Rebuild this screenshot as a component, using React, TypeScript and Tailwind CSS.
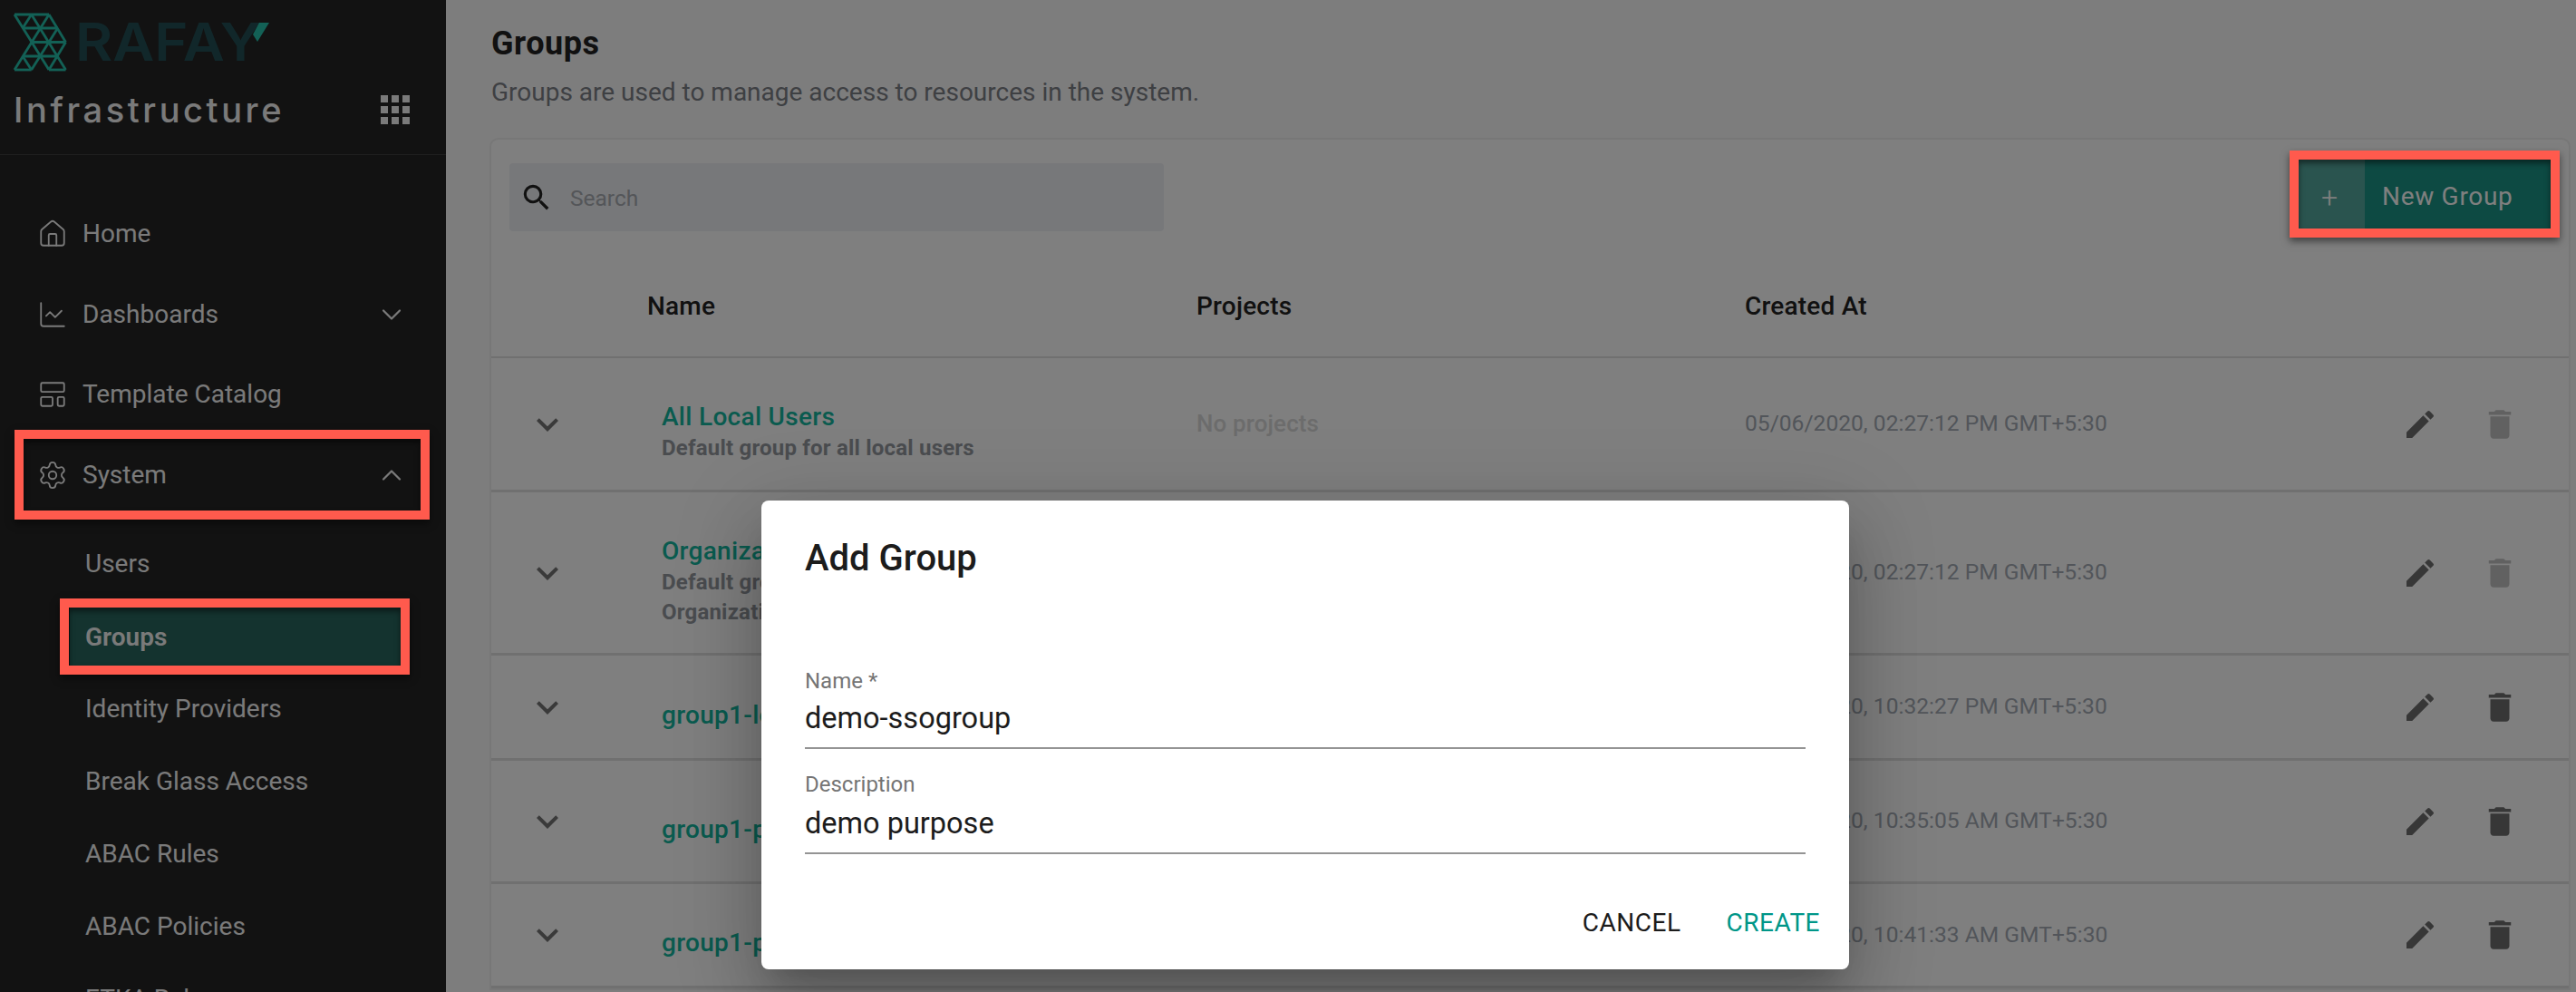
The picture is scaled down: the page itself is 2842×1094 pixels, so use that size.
import { ChartLine, ChevronDown, ChevronUp, House, LayoutTemplate, Settings } from 'lucide-react'
import { MdDelete, MdEdit, MdExpandMore, MdSearch } from 'react-icons/md'

const subItems = ['Users', 'Groups', 'Identity Providers', 'Break Glass Access', 'ABAC Rules', 'ABAC Policies', 'ETKA Rules']

const rows = [
    { name: 'All Local Users', desc: ['Default group for all local users'], projects: 'No projects', date: '05/06/2020, 02:27:12 PM GMT+5:30', h: 'h-[148px]', locked: true },
    { name: 'Organization Admins', desc: ['Default group for organization admins', 'Organization wide access'], projects: 'No projects', date: '05/06/2020, 02:27:12 PM GMT+5:30', h: 'h-[180px]', locked: true },
    { name: 'group1-local', desc: [], projects: 'No projects', date: '07/21/2020, 10:32:27 PM GMT+5:30', h: 'h-[116px]', locked: false },
    { name: 'group1-prod', desc: [], projects: 'No projects', date: '08/14/2020, 10:35:05 AM GMT+5:30', h: 'h-[136px]', locked: false },
    { name: 'group1-platform', desc: [], projects: 'No projects', date: '08/14/2020, 10:41:33 AM GMT+5:30', h: 'h-[115px]', locked: false },
]

// triangle lattice of the logo, in page pixels
const latticeX = { a: 16, b: 25, c: 34.7, d: 44.3, e: 54, f: 63.7, g: 72.5 }
const latticeY = [16, 31, 46.5, 62, 77]
const latticeLines: [keyof typeof latticeX, number, keyof typeof latticeX, number][] = [
    ['a', 0, 'e', 0], ['b', 1, 'f', 1], ['c', 2, 'g', 2], ['b', 3, 'f', 3], ['a', 4, 'c', 4], ['e', 4, 'g', 4],
    ['a', 0, 'e', 4], ['c', 0, 'g', 4], ['e', 0, 'g', 2], ['b', 3, 'c', 4],
    ['e', 0, 'a', 4], ['g', 2, 'e', 4], ['f', 1, 'c', 4], ['c', 0, 'b', 1],
]

function Logo() {
    return (
        <svg width="300" height="90" viewBox="0 0 300 90" className="block">
            {latticeLines.map(([x1, y1, x2, y2], i) => (
                <line key={i} x1={latticeX[x1]} y1={latticeY[y1]} x2={latticeX[x2]} y2={latticeY[y2]} stroke="#26c2ac" strokeWidth="2.8" />
            ))}
            <text x="83" y="67" fontFamily="Inter, sans-serif" fontWeight="600" fontSize="58" fill="#234f55" textLength="205" lengthAdjust="spacingAndGlyphs">
                RAFAY
            </text>
            <polygon points="286,25 297,25 284,46 279,38" fill="#26c2ac" />
        </svg>
    )
}

function NavItem({ icon, label, chevron }: { icon: React.ReactNode; label: string; chevron?: 'up' | 'down' }) {
    return (
        <div className="flex h-[88.5px] items-center pl-[41px] pr-[42px]">
            <span className="flex w-[34px] justify-center">{icon}</span>
            <span className="ml-[16px] flex-1 text-[28px] text-[#f4f4f4]">{label}</span>
            {chevron === 'down' && <ChevronDown size={36} strokeWidth={1.5} className="text-[#f4f4f4]" />}
            {chevron === 'up' && <ChevronUp size={36} strokeWidth={1.5} className="text-[#f4f4f4]" />}
        </div>
    )
}

function Sidebar() {
    return (
        <aside className="flex h-full w-[492px] shrink-0 flex-col overflow-hidden bg-[#242424] font-[Roboto,sans-serif]">
            <div className="h-[171px] shrink-0 border-b border-[#3e3e3e]">
                <Logo />
                <div className="flex items-center justify-between pl-[15px] pr-[40px] pt-[9px]">
                    <span className="font-[Inter,sans-serif] text-[38px] font-medium leading-[44px] tracking-[3.6px] text-[#f4f4f4]">Infrastructure</span>
                    <span className="grid grid-cols-3 gap-[4px]">
                        {Array.from({ length: 9 }).map((_, i) => (
                            <span key={i} className="size-[8px] bg-[#f4f4f4]" />
                        ))}
                    </span>
                </div>
            </div>
            <nav className="pt-[43px]">
                <NavItem icon={<House size={34} strokeWidth={1.3} className="text-[#f4f4f4]" />} label="Home" />
                <NavItem icon={<ChartLine size={34} strokeWidth={1.3} className="text-[#f4f4f4]" />} label="Dashboards" chevron="down" />
                <NavItem icon={<LayoutTemplate size={34} strokeWidth={1.3} className="text-[#f4f4f4]" />} label="Template Catalog" />
                <NavItem icon={<Settings size={34} strokeWidth={1.3} className="text-[#f4f4f4]" />} label="System" chevron="up" />
                <div className="flex flex-col pl-[77px] pr-[50px] pt-[14px]">
                    {subItems.map((item) => (
                        <div
                            key={item}
                            className={
                                item === 'Groups'
                                    ? 'flex h-[80px] items-center rounded-lg bg-[#28665e] pl-[17px] pt-[2px] text-[28px] font-semibold text-[#f4f4f4]'
                                    : 'flex h-[80px] items-center pl-[17px] text-[28px] text-[#f4f4f4]'
                            }
                        >
                            {item}
                        </div>
                    ))}
                </div>
            </nav>
        </aside>
    )
}

function GroupRow({ row }: { row: (typeof rows)[number] }) {
    return (
        <div className={`grid grid-cols-[172px_606px_605px_701px_88px_88px] items-center border-b-[3px] border-[#e0e0e0] ${row.h}`}>
            <span className="flex justify-end pr-[86px]">
                <MdExpandMore size={48} className="text-[#757575]" />
            </span>
            <div className="pl-4 pt-[18px]">
                <div className="text-[28px] font-medium leading-[36px] tracking-[0.3px] text-[#14b69e]">{row.name}</div>
                {row.desc.map((line) => (
                    <div key={line} className="text-[24px] font-bold leading-[33px] tracking-[0.2px] text-[#94999f]">
                        {line}
                    </div>
                ))}
            </div>
            <span className="text-[26px] font-medium tracking-[0.1px] text-[#d8d8d8]">{row.projects}</span>
            <span className="text-[24.6px] text-[#a4abb4]">{row.date}</span>
            <span className="flex justify-center">
                <MdEdit size={40} className="text-[#6e6e6e]" />
            </span>
            <span className="flex justify-center">
                <MdDelete size={42} className={row.locked ? 'text-[#c2c2c2]' : 'text-[#6e6e6e]'} />
            </span>
        </div>
    )
}

function GroupsPage() {
    return (
        <main className="h-full flex-1 overflow-hidden bg-[#fafafa] pl-[50px] pr-2 pt-[26px] font-[Roboto,sans-serif]">
            <h1 className="text-[36px] font-bold leading-[44px] tracking-[0.5px] text-[#222222]">Groups</h1>
            <p className="mt-[12px] text-[28px] leading-[40px] text-[#7d8087]">Groups are used to manage access to resources in the system.</p>
            <section className="mt-[32px] rounded-t-lg bg-white shadow-[0_0_0_2px_#eeeeee]">
                <div className="flex h-[127px] items-start justify-between pl-[20px] pr-[20px]">
                    <div className="mt-[26px] flex h-[75px] w-[722px] items-center rounded bg-[#eef0f4] pl-[11px]">
                        <MdSearch size={38} className="text-[#222222]" />
                        <span className="ml-[18px] pt-[4px] text-[24.5px] text-[#a8acb2]">Search</span>
                    </div>
                    <button className="mt-[22px] flex h-[76px] w-[278px] items-center bg-[#1a9486] pt-[6px] text-[28px] tracking-[0.7px] text-white">
                        <span className="-mt-[6px] flex h-[76px] w-[73px] items-center justify-center bg-[#54a89e] pr-[4px] pt-[7px] text-[32px] font-light">+</span>
                        <span className="ml-[19px]">New Group</span>
                    </button>
                </div>
                <div className="grid h-[114px] grid-cols-[172px_606px_605px_1fr] items-center border-b-[2px] border-[#e0e0e0] pt-[2px] text-[28px] font-medium tracking-[0.2px] text-[#222222]">
                    <span />
                    <span>Name</span>
                    <span>Projects</span>
                    <span>Created At</span>
                </div>
                {rows.map((row) => (
                    <GroupRow key={row.name} row={row} />
                ))}
            </section>
        </main>
    )
}

function AddGroupDialog() {
    return (
        <div className="absolute left-[840px] top-[552px] flex h-[517px] w-[1200px] flex-col rounded-lg bg-white pl-[48px] pr-[48px] pt-[40px] font-[Roboto,sans-serif] shadow-[0_22px_30px_-14px_rgba(0,0,0,0.2),0_48px_76px_6px_rgba(0,0,0,0.14),0_18px_92px_16px_rgba(0,0,0,0.12)]">
            <h2 className="text-[40px] font-medium leading-[48px] text-[#1c1c1c]">Add Group</h2>
            <label className="mt-[97px] block text-[24px] leading-[28px] text-[#757575]">Name *</label>
            <div className="mt-[7px] border-b-2 border-[#949494] pb-[12px] text-[32.5px] leading-[40px] text-[#1c1c1c]">demo-ssogroup</div>
            <label className="mt-[25px] block text-[24px] leading-[28px] text-[#757575]">Description</label>
            <div className="mt-[9px] border-b-2 border-[#949494] pb-[12px] text-[32.5px] leading-[40px] text-[#1c1c1c]">demo purpose</div>
            <div className="-mr-[16px] mt-[60px] flex justify-end gap-[50px] text-[28px] leading-[32px] tracking-[0.5px]">
                <span className="text-[#1c1c1c]">CANCEL</span>
                <span className="text-[#009688]">CREATE</span>
            </div>
        </div>
    )
}

function Callout({ className }: { className: string }) {
    return <div className={`absolute border-[10px] border-[#ff5a4d] shadow-[0_4px_8px_rgba(0,0,0,0.5),inset_0_4px_6px_rgba(0,0,0,0.5)] ${className}`} />
}

export default function App() {
    return (
        <div className="relative flex h-screen w-screen overflow-hidden">
            <Sidebar />
            <GroupsPage />
            <div className="absolute inset-0 bg-black/50" />
            <AddGroupDialog />
            <Callout className="left-[16px] top-[474px] h-[99px] w-[458px]" />
            <Callout className="left-[66px] top-[660px] h-[84px] w-[386px]" />
            <Callout className="left-[2526px] top-[166px] h-[96px] w-[298px]" />
        </div>
    )
}
